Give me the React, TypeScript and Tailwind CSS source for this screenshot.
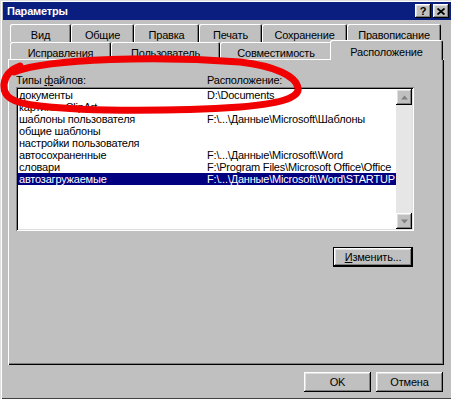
import React from 'react';

const raised =
  'shadow-[inset_-1px_-1px_0_#000,inset_1px_1px_0_#fff,inset_-2px_-2px_0_#808080,inset_2px_2px_0_#dfdfdf]';
const sunken =
  'shadow-[inset_1px_1px_0_#808080,inset_-1px_-1px_0_#fff,inset_2px_2px_0_#000,inset_-2px_-2px_0_#dfdfdf]';
const tabEdge = 'shadow-[inset_1px_1px_0_#fff,inset_-1px_0_0_#000,inset_-2px_0_0_#808080]';

const backTabs: [string, string][] = [
  ['Вид', 'w-[61px]'],
  ['Общие', 'w-[63px]'],
  ['Правка', 'w-[65px]'],
  ['Печать', 'w-[63px]'],
  ['Сохранение', 'w-[85px]'],
  ['Правописание', 'w-[94px]'],
];

const frontTabs: [string, string][] = [
  ['Исправления', 'w-[101px]'],
  ['Пользователь', 'w-[109px]'],
  ['Совместимость', 'w-[112px]'],
];

const rows: [string, string][] = [
  ['документы', 'D:\\Documents'],
  ['картинки ClipArt', ''],
  ['шаблоны пользователя', 'F:\\...\\Данные\\Microsoft\\Шаблоны'],
  ['общие шаблоны', ''],
  ['настройки пользователя', ''],
  ['автосохраненные', 'F:\\...\\Данные\\Microsoft\\Word'],
  ['словари', 'F:\\Program Files\\Microsoft Office\\Office'],
  ['автозагружаемые', 'F:\\...\\Данные\\Microsoft\\Word\\STARTUP'],
];

const Arrow = ({ up }: { up?: boolean }) => (
  <svg width="7" height="5" viewBox="0 0 7 5">
    <path d={up ? 'M3.5 0.5 L7 4.5 L0 4.5 Z' : 'M0 0.5 L7 0.5 L3.5 4.5 Z'} fill="#808080" />
  </svg>
);

const App: React.FC = () => {
  const selected = 7;

  return (
    <div className="relative w-[451px] h-[399px] overflow-hidden bg-[#c0c0c0] text-[11px] leading-[12px] tracking-[-0.2px] text-black font-['Liberation_Sans',Arial,sans-serif] shadow-[inset_1px_1px_0_#dfdfdf,inset_2px_2px_0_#fff,inset_0_-1px_0_#404040]">
      {/* title bar */}
      <div className="ml-[3px] mt-[2px] h-[18px] bg-[#0a1e80] flex items-center justify-between pl-[4px] pr-[2px]">
        <span className="text-white font-bold">Параметры</span>
        <div className="flex gap-[2px]">
          <div className={`w-[16px] h-[14px] bg-[#c0c0c0] ${raised} flex items-center justify-center font-bold text-[11px] leading-none`}>
            ?
          </div>
          <div className={`w-[16px] h-[14px] bg-[#c0c0c0] ${raised} flex items-center justify-center`}>
            <svg width="8" height="7" viewBox="0 0 8 7">
              <path d="M0.5 0.5 L7.5 6.5 M7.5 0.5 L0.5 6.5" stroke="#000" strokeWidth="1.8" />
            </svg>
          </div>
        </div>
      </div>

      {/* tabs back row */}
      <div className="ml-[10px] mt-[4px] flex h-[18px]">
        {backTabs.map(([t, w]) => (
          <div key={t} className={`${w} h-full rounded-t-[2px] ${tabEdge} flex items-start justify-center pt-[5px]`}>
            {t}
          </div>
        ))}
      </div>

      {/* tabs front row */}
      <div className="ml-[10px] flex items-end h-[17px]">
        {frontTabs.map(([t, w]) => (
          <div key={t} className={`${w} h-full rounded-t-[2px] ${tabEdge} flex items-start justify-center pt-[5px]`}>
            {t}
          </div>
        ))}
        <div className={`relative z-10 -ml-[2px] w-[113px] h-[20px] -mb-[1px] self-end bg-[#c0c0c0] rounded-t-[2px] ${tabEdge} flex items-start justify-center pt-[6px]`}>
          Расположение
        </div>
      </div>

      {/* panel */}
      <div className="ml-[8px] w-[436px] h-[306px] shadow-[inset_1px_1px_0_#fff,inset_-1px_-1px_0_#000,inset_-2px_-2px_0_#808080] pl-[8px] pt-[15px]">
        <div className="flex">
          <span className="w-[191px]">
            Типы <span className="underline">ф</span>айлов:
          </span>
          <span>Расположение:</span>
        </div>

        <div className={`mt-[1px] w-[398px] h-[144px] bg-white ${sunken} p-[2px] flex`}>
          <div className="flex-1 flex flex-col">
            {rows.map(([name, path], i) => (
              <div
                key={name}
                className={`h-[12px] flex items-center whitespace-nowrap ${i === selected ? 'bg-[#000080] text-white' : ''}`}
              >
                <span className="w-[189px] pl-[1px]">{name}</span>
                <span>{path}</span>
              </div>
            ))}
          </div>
          <div className="w-[16px] flex flex-col bg-[#e6e6e6]">
            <div className={`h-[16px] bg-[#c0c0c0] ${raised} flex items-center justify-center`}>
              <Arrow up />
            </div>
            <div className="flex-1" />
            <div className={`h-[16px] bg-[#c0c0c0] ${raised} flex items-center justify-center`}>
              <Arrow />
            </div>
          </div>
        </div>

        <div className="w-[397px] flex justify-end mt-[16px]">
          <div className="w-[80px] h-[20px] border border-black">
            <div className={`w-full h-full ${raised} flex items-center justify-center`}>
              <span>
                <span className="underline">И</span>зменить...
              </span>
            </div>
          </div>
        </div>
      </div>

      {/* dialog buttons */}
      <div className="mt-[7px] mr-[8px] flex justify-end gap-[5px]">
        <div className={`w-[67px] h-[20px] ${raised} flex items-center justify-center`}>OK</div>
        <div className={`w-[67px] h-[20px] ${raised} flex items-center justify-center`}>Отмена</div>
      </div>

      {/* hand-drawn red mark */}
      <svg className="absolute left-0 top-0 pointer-events-none" width="451" height="399" viewBox="0 0 451 399">
        <path
          d="M14 72 C50 58, 160 56, 240 62 C275 66, 296 76, 298 88 C300 99, 275 104, 240 107 C180 111, 90 112, 40 106 C10 103, 3 96, 4 84 C5 76, 9 70, 20 66"
          fill="none"
          stroke="#f00000"
          strokeWidth="7"
          strokeLinecap="round"
        />
      </svg>
    </div>
  );
};

export default App;
